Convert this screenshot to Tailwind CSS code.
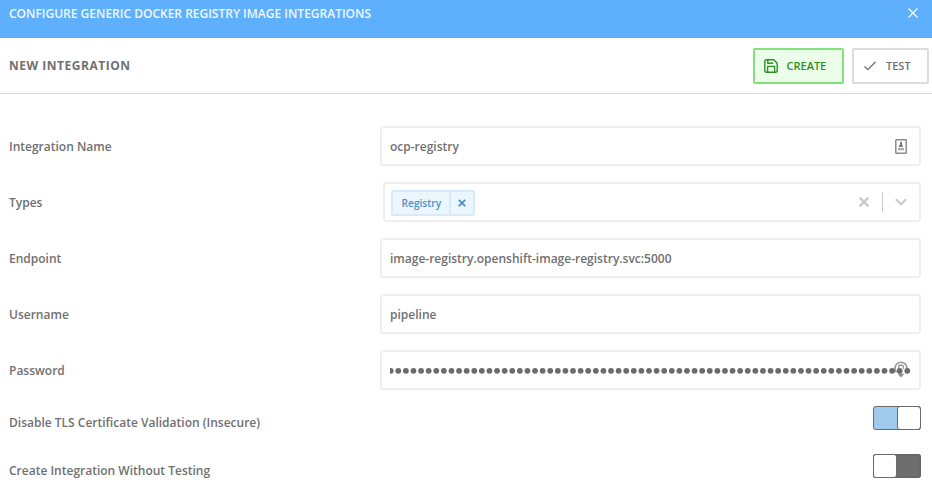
<!DOCTYPE html>
<html lang="en">
<head>
<meta charset="utf-8">
<title>New Integration</title>
<script src="https://cdn.jsdelivr.net/npm/@tailwindcss/browser@4"></script>
</head>
<body class="h-[489px] overflow-hidden bg-white font-['Open_Sans','Noto_Sans',sans-serif] text-xs font-semibold text-[#707070]">
<header class="flex h-[38px] items-start justify-between bg-[#5fb0fc] pl-[9px] pr-[14px] text-white">
  <h1 class="mt-[6px] whitespace-nowrap leading-4 text-white/90">CONFIGURE GENERIC DOCKER REGISTRY IMAGE INTEGRATIONS</h1>
  <svg class="mt-2 size-[10px]" viewBox="0 0 10 10" fill="none" stroke="currentColor" stroke-width="1.2"><path d="M.5.5l9 9M9.5.5l-9 9"/></svg>
</header>
<div class="flex h-14 items-center justify-between border-b border-[#d9d9d9] pl-[9px] pr-[3px]">
  <h2 class="font-bold tracking-[0.52px]">NEW INTEGRATION</h2>
  <div class="flex gap-2 text-[11px]">
    <button class="flex h-9 w-[91px] items-center rounded-[2px] border-2 border-[#85e17a] bg-[#ebfee9] pl-[9px] text-[#2e8f27]">
      <svg class="mr-2 size-[14px]" viewBox="0 0 14 14" fill="none" stroke="currentColor" stroke-width="1.4" stroke-linejoin="round"><path d="M2.2.8h7.6l3.4 3.4v7.6a1.4 1.4 0 0 1-1.4 1.4H2.2a1.4 1.4 0 0 1-1.4-1.4V2.2A1.4 1.4 0 0 1 2.2.8zM3.6 13V7.4h7V13M3.8 1v3.2h5.4"/></svg>
      <span class="pl-[0.5px] pt-px">CREATE</span>
    </button>
    <button class="flex h-9 w-[77px] items-center rounded-[2px] border-2 border-[#dcdcdc] pl-[10px]">
      <svg class="mr-[10px] h-[10px] w-3" viewBox="0 0 12 10" fill="none" stroke="currentColor" stroke-width="1.3"><path d="M.5 5.6l3.4 3L11.5.7"/></svg>
      <span class="pt-px">TEST</span>
    </button>
  </div>
</div>
<main class="flex flex-col gap-4 pl-[9px] pr-[11px] pt-8">
  <div class="flex h-10 items-center"><label class="w-[371px] pt-0.5">Integration Name</label>
    <div class="flex h-10 flex-1 items-center justify-between rounded-[3px] border-2 border-[#eeeeee] pl-2 pr-[12px]"><span class="pt-0.5">ocp-registry</span>
      <svg class="h-[15px] w-3" viewBox="0 0 12 15"><rect x=".8" y=".8" width="10.4" height="13.4" rx=".5" fill="#fff" stroke="#8e8e8e" stroke-width="1.5"/><path d="M5 3h2v2.5l1 1.5v1H4V7l1-1.5z" fill="#777"/><path d="M3 9h6v2.3H3z" fill="#aaa"/></svg>
    </div></div>
  <div class="flex h-10 items-center"><label class="w-[374px] pt-0.5">Types</label>
    <div class="flex h-10 flex-1 items-center rounded-[3px] border-2 border-[#eeeeee] pl-[6px] pr-3">
      <div class="mt-[2px] flex h-[26px] w-[84px] rounded-[2px] border-2 border-[#d6eafc] bg-[#ebf6ff] text-[10.2px] text-[#4a92cb]">
        <span class="flex w-[56px] items-center pl-[8.5px] pt-0.5">Registry</span>
        <span class="flex flex-1 items-center justify-center border-l-2 border-[#d6eafc]"><svg class="size-[8px]" viewBox="0 0 8 8" stroke="currentColor" stroke-width="1.9"><path d="M.8.8l6.4 6.4M7.2.8L.8 7.2"/></svg></span>
      </div>
      <svg class="ml-auto size-[10px]" viewBox="0 0 10 10" stroke="#cacaca" stroke-width="2.4"><path d="M.6.6l8.8 8.8M9.4.6L.6 9.4"/></svg>
      <span class="ml-[13px] h-5 w-px bg-[#cccccc]"></span>
      <svg class="ml-3 h-[8px] w-3" viewBox="0 0 12 8" fill="none" stroke="#cacaca" stroke-width="2.2"><path d="M.8 1.2L6 6.2l5.2-5"/></svg>
    </div></div>
  <div class="flex h-10 items-center"><label class="w-[371px] pt-0.5">Endpoint</label>
    <div class="flex h-10 flex-1 items-center rounded-[3px] border-2 border-[#eeeeee] pl-2 pt-0.5">image-registry.openshift-image-registry.svc:5000</div></div>
  <div class="flex h-10 items-center"><label class="w-[371px] pt-0.5">Username</label>
    <div class="flex h-10 flex-1 items-center rounded-[3px] border-2 border-[#eeeeee] pl-2 pt-0.5">pipeline</div></div>
  <div class="flex h-10 items-center"><label class="w-[371px] pt-0.5">Password</label>
    <div class="flex h-10 flex-1 items-center rounded-[3px] border-2 border-[#eeeeee] pl-2">
      <svg class="h-5 w-[521px]" viewBox="0 0 521 20" fill="none">
        <path d="M506.5 12.2a6 6 0 1 1 9 0" stroke="#999" stroke-width="1.7"/>
        <path d="M508.5 9V7.5a2.5 2.5 0 0 1 5 0V9M511 10v5" stroke="#999" stroke-width="1.3"/>
        <path d="M507.5 13.8h7L511 17.5z" fill="#8e8e8e"/>
        <path d="M.7 10.8H518" stroke="#6b6b6b" stroke-width="5.8" stroke-linecap="round" stroke-dasharray="0 7.597"/>
      </svg>
    </div></div>
</main>
<div class="flex h-24 flex-col pl-[9px] pr-[11px]">
  <div class="flex h-12 items-start justify-between pt-4"><label class="pt-[9px] leading-4">Disable TLS Certificate Validation (Insecure)</label>
    <div class="flex h-6 w-12 justify-end rounded-[3px] bg-[#a0cbed] outline outline-1 -outline-offset-1 outline-[#6b6b6b]"><span class="w-6 rounded-[3px] border border-[#6b6b6b] bg-white"></span></div></div>
  <div class="flex h-12 items-start justify-between pt-4"><label class="pt-[9px] leading-4">Create Integration Without Testing</label>
    <div class="flex h-6 w-12 rounded-[3px] bg-[#6e6e6e] shadow-[inset_0_0_3px_#555]"><span class="w-6 rounded-[3px] border border-[#6b6b6b] bg-white"></span></div></div>
</div>
</body>
</html>
